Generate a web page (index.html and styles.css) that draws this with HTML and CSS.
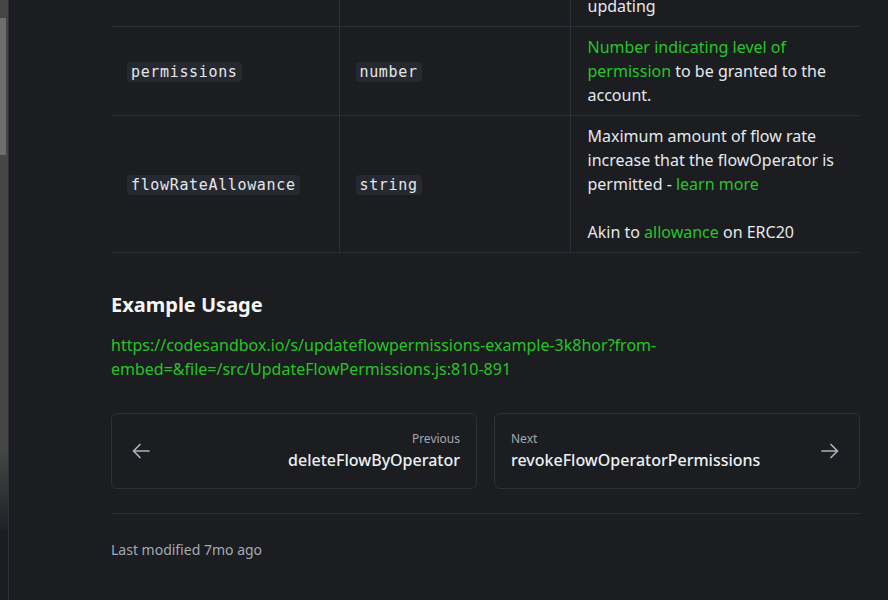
FILE: index.html
```html
<!DOCTYPE html>
<html lang="en">
<head>
<meta charset="utf-8">
<title>updateFlowOperatorPermissions</title>
<link rel="stylesheet" href="styles.css">
</head>
<body>
<div class="layout">
  <aside class="sidebar">
    <div class="track"><div class="thumb"></div></div>
  </aside>
  <main class="main">
    <div class="content">
      <table class="params">
        <colgroup>
          <col class="c1"><col class="c2"><col class="c3">
        </colgroup>
        <tbody>
          <tr>
            <td><code>flowOperator</code></td>
            <td><code>string</code></td>
            <td>Address of the flowOperator<br>whose permissions you are<br>updating</td>
          </tr>
          <tr>
            <td><code>permissions</code></td>
            <td><code>number</code></td>
            <td><a href="#">Number indicating level of permission</a> to be granted to the account.</td>
          </tr>
          <tr>
            <td><code>flowRateAllowance</code></td>
            <td><code>string</code></td>
            <td>
              <p>Maximum amount of flow rate increase that the flowOperator is permitted - <a href="#">learn more</a></p>
              <p>Akin to <a href="#">allowance</a> on ERC20</p>
            </td>
          </tr>
        </tbody>
      </table>

      <h2 class="heading">Example Usage</h2>
      <p class="link-para"><a href="#">https://codesandbox.io/s/updateflowpermissions-example-3k8hor?from-embed=&amp;file=/src/UpdateFlowPermissions.js:810-891</a></p>

      <nav class="pager">
        <a class="card prev" href="#">
          <svg class="arrow" width="20" height="20" viewBox="0 0 20 20" fill="none" stroke="currentColor" stroke-width="1.7" stroke-linecap="round" stroke-linejoin="round"><path d="M18 10H2.5M9 3.5L2.5 10L9 16.5"/></svg>
          <span class="card-text">
            <span class="label">Previous</span>
            <span class="title">deleteFlowByOperator</span>
          </span>
        </a>
        <a class="card next" href="#">
          <span class="card-text">
            <span class="label">Next</span>
            <span class="title">revokeFlowOperatorPermissions</span>
          </span>
          <svg class="arrow" width="20" height="20" viewBox="0 0 20 20" fill="none" stroke="currentColor" stroke-width="1.7" stroke-linecap="round" stroke-linejoin="round"><path d="M2 10H17.5M11 3.5L17.5 10L11 16.5"/></svg>
        </a>
      </nav>

      <footer class="footer">Last modified 7mo ago</footer>
    </div>
  </main>
</div>
</body>
</html>
```

FILE: styles.css
```css
html, body {
  margin: 0;
  padding: 0;
  background: #1b1d21;
  height: 100%;
  overflow: hidden;
}

body {
  font-family: "Noto Sans", "Open Sans", sans-serif;
  color: #e6e8eb;
  font-size: 16px;
  line-height: 24px;
}

.layout {
  display: flex;
  height: 600px;
}

.sidebar {
  width: 8px;
  flex: none;
  border-right: 1px solid #2c303a;
}

.track {
  height: 530px;
  background: linear-gradient(to bottom, #464646 0, #464646 450px, #1f2125 530px);
  padding-top: 18px;
  box-sizing: border-box;
}

.thumb {
  width: 6px;
  height: 137px;
  background: #6e6e6e;
}

.main {
  flex: 1;
  overflow: hidden;
}

.content {
  width: 749px;
  margin-left: 102px;
}

.params {
  width: 748px;
  border-collapse: collapse;
  table-layout: fixed;
  margin-top: -62px;
}

.c1 { width: 228px; }
.c2 { width: 231px; }
.c3 { width: 289px; }

.params td {
  border-bottom: 1px solid #2c3038;
  padding: 8px 16px;
  vertical-align: middle;
}

.params td + td {
  border-left: 1px solid #2c3038;
}

.params td:last-child {
  padding-left: 17px;
}

.params p {
  margin: 0;
}

.params p + p {
  margin-top: 24px;
}

code {
  font-family: "DejaVu Sans Mono", monospace;
  font-size: 15px;
  line-height: 20px;
  display: inline-block;
  background: #262a30;
  color: #e3e6ea;
  border-radius: 4px;
  padding: 0 4px;
  letter-spacing: 0.65px;
}

a {
  color: #27c427;
  text-decoration: none;
}

.heading {
  margin: 38px 0 14px;
  font-size: 20px;
  line-height: 28px;
  font-weight: 700;
  color: #f4f5f6;
}

.link-para {
  margin: 0 0 32px;
  word-break: break-word;
}

.pager {
  display: flex;
  gap: 17px;
  padding-bottom: 24px;
  border-bottom: 1px solid #2c3038;
}

.card {
  flex: 1;
  display: flex;
  align-items: center;
  border: 1px solid #2c3038;
  border-radius: 6px;
  padding: 16px 16px 16px 19px;
  color: #e6e8eb;
}

.card.next {
  padding: 16px 19px 16px 16px;
}

.card-text {
  flex: 1;
  display: flex;
  flex-direction: column;
}

.prev .card-text {
  text-align: right;
}

.label {
  font-size: 12px;
  line-height: 18px;
  color: #a2a8b2;
}

.title {
  font-size: 16px;
  line-height: 24px;
  font-weight: 500;
  color: #eef0f2;
}

.arrow {
  flex: none;
  color: #aab1bd;
}

.footer {
  padding-top: 26px;
  font-size: 14px;
  line-height: 20px;
  color: #a4aab4;
}
```
